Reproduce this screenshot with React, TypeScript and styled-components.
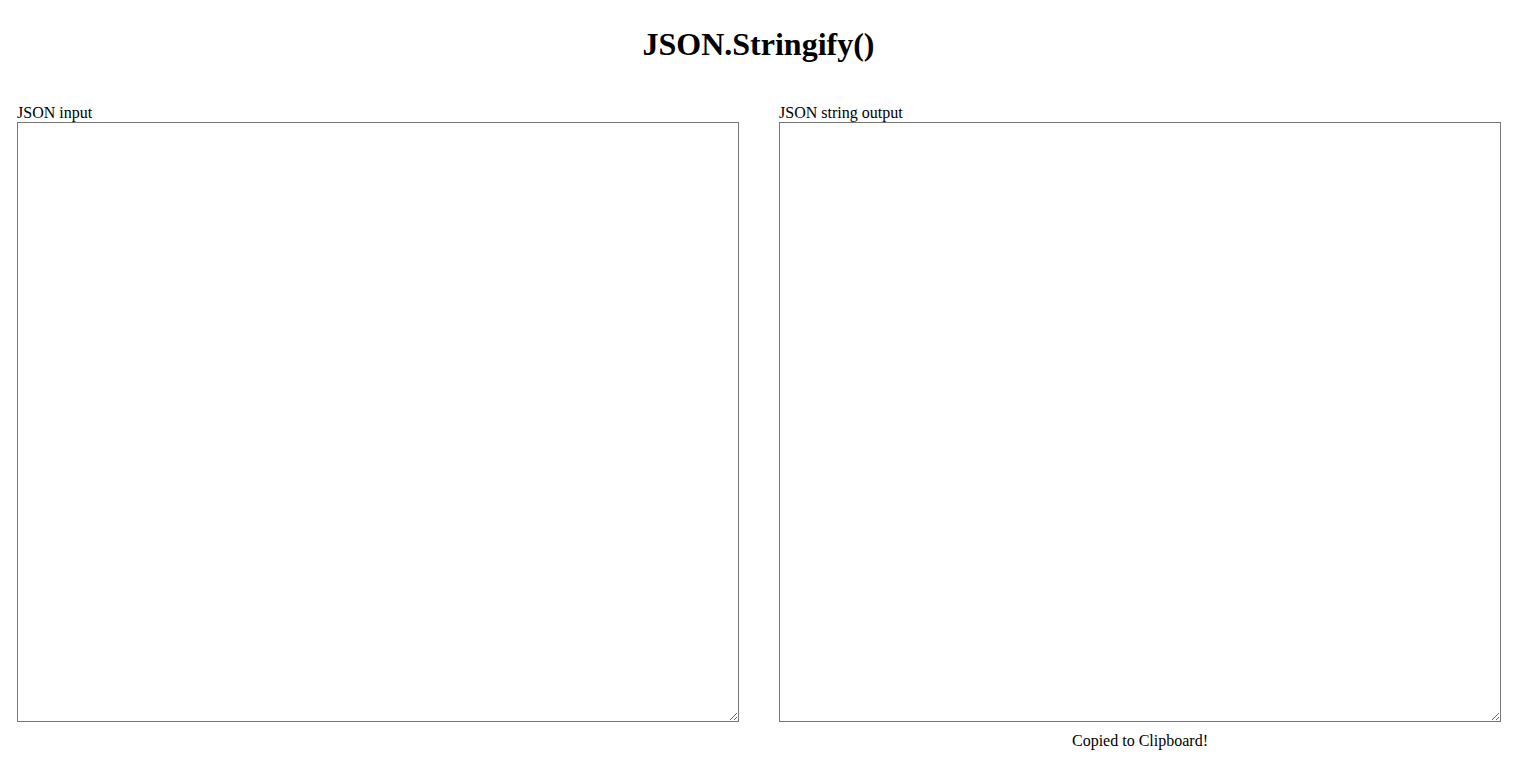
import React, {useState} from "react";

// styling
import styled, {createGlobalStyle} from "styled-components";

// global page reset
const GlobalStyle = createGlobalStyle`
  body {
    margin: 0;
    background-color: rgb(255, 255, 255);
    color: rgb(0, 0, 0);
    font-family: "Liberation Serif", "Times New Roman", serif;
    font-size: 16px;
  }
`;

// styles
const StyledPage = styled.div`
  padding-top: 26px;
`;

const StyledTitle = styled.h1`
  margin: 0;
  padding-right: 6px;
  font-size: 32px;
  font-weight: 700;
  text-align: center;
`;

const StyledColumns = styled.div`
  display: grid;
  grid-template-columns: 1fr 1fr;
  column-gap: 40px;
  margin-top: 41px;
  padding: 0 22px 0 17px;
`;

const StyledColumn = styled.div`
  display: flex;
  flex-direction: column;
`;

const StyledLabel = styled.label`
  display: block;
`;

const StyledTextarea = styled.textarea`
  display: block;
  width: 100%;
  height: 600px;
  box-sizing: border-box;
  margin: 0;
  padding: 2px;
  border: 1px solid rgb(118, 118, 118);
  font-family: monospace;
  font-size: 13px;
  resize: both;
`;

const StyledStatus = styled.p<{visible: boolean}>`
  margin: 10px 0 0;
  text-align: center;
  visibility: ${(props) => (props.visible ? "visible" : "hidden")};
`;

const App: React.FC = () => {
  // state for the raw json
  const [input, setInput] = useState<string>("");
  // state for the stringified output
  const [output, setOutput] = useState<string>("");

  // stringify whatever parses
  const handleInput = (value: string) => {
    setInput(value);
    try {
      setOutput(value.trim() ? JSON.stringify(JSON.stringify(JSON.parse(value))) : "");
    } catch {
      setOutput("");
    }
  };

  return (
    <StyledPage>
      <GlobalStyle />
      <StyledTitle>JSON.Stringify()</StyledTitle>
      <StyledColumns>
        <StyledColumn>
          <StyledLabel htmlFor="json-input">JSON input</StyledLabel>
          <StyledTextarea
            id="json-input"
            value={input}
            onChange={(event) => handleInput(event.target.value)}
          />
        </StyledColumn>
        <StyledColumn>
          <StyledLabel htmlFor="json-output">JSON string output</StyledLabel>
          <StyledTextarea id="json-output" value={output} readOnly />
          <StyledStatus visible={true}>Copied to Clipboard!</StyledStatus>
        </StyledColumn>
      </StyledColumns>
    </StyledPage>
  );
};

export default App;
